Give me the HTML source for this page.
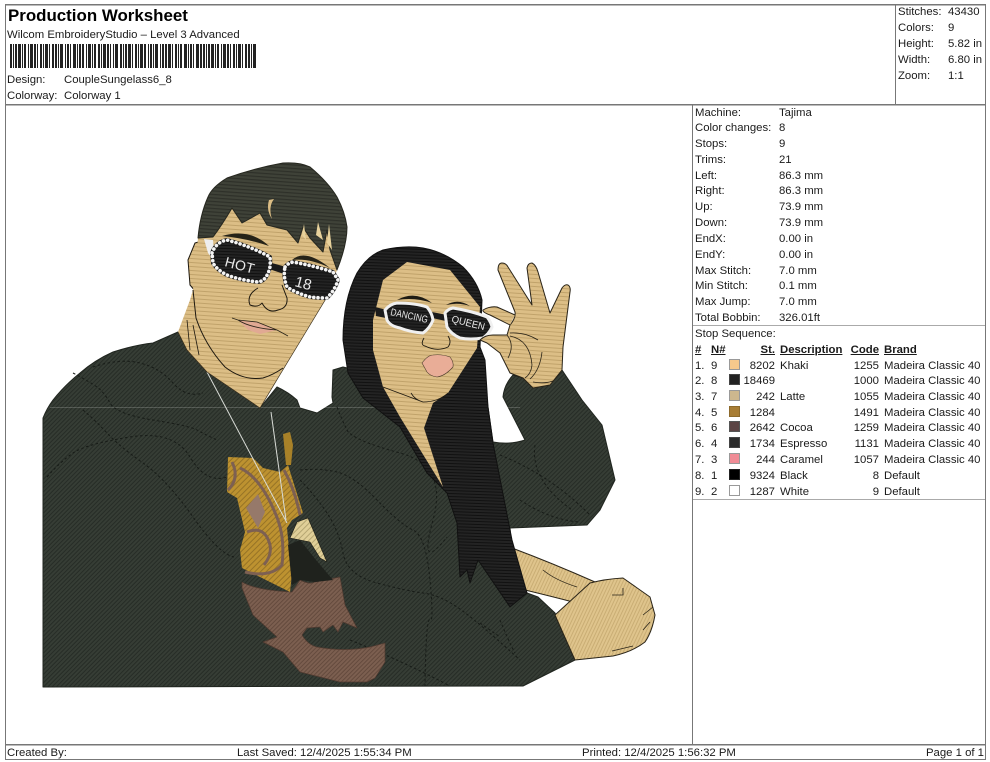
<!DOCTYPE html>
<html><head><meta charset="utf-8"><title>Production Worksheet</title>
<style>
html,body{margin:0;padding:0;background:#fff}
#p{position:relative;width:990px;height:762px;overflow:hidden;background:#fff;font:11.35px/14px "Liberation Sans",sans-serif;color:#1a1a1a}
#p div{position:absolute;white-space:nowrap}
.r{text-align:right}
.b{font-weight:bold;text-decoration:underline}
.s{width:9px;height:9px;border:1px solid #999}
svg{position:absolute;left:0;top:0}
svg path{stroke-linejoin:round}
</style></head><body><div id="p">
<svg width="990" height="762" viewBox="0 0 990 762">
<defs>
<pattern id="j" width="3" height="3" patternUnits="userSpaceOnUse" patternTransform="rotate(-45)"><rect width="3" height="3" fill="#363d35"/><rect width="3" height="1" fill="#262c26"/></pattern>
<pattern id="h" width="3.5" height="3.5" patternUnits="userSpaceOnUse" patternTransform="rotate(4)"><rect width="4" height="4" fill="#3f4238"/><rect width="4" height="1.2" fill="#2e3029"/></pattern>
<pattern id="k" width="3" height="3" patternUnits="userSpaceOnUse" patternTransform="rotate(2)"><rect width="3" height="3" fill="#232323"/><rect width="3" height="1" fill="#111"/></pattern>
<pattern id="t" width="4" height="4" patternUnits="userSpaceOnUse" patternTransform="rotate(4)"><rect width="4" height="4" fill="#dcbe86"/><rect width="4" height="1" fill="#c0a26a"/></pattern>
<pattern id="u" width="3" height="3" patternUnits="userSpaceOnUse" patternTransform="rotate(-65)"><rect width="3" height="3" fill="#dfc48c"/><rect width="3" height="1" fill="#c9ad74"/></pattern>
<pattern id="g" width="4" height="4" patternUnits="userSpaceOnUse" patternTransform="rotate(-45)"><rect width="4" height="4" fill="#bd9230"/><rect width="4" height="1" fill="#967326"/></pattern>
<pattern id="m" width="3" height="3" patternUnits="userSpaceOnUse" patternTransform="rotate(-45)"><rect width="3" height="3" fill="#7c5f50"/><rect width="3" height="1" fill="#644a3d"/></pattern>
<pattern id="c" width="4" height="4" patternUnits="userSpaceOnUse" patternTransform="rotate(-45)"><rect width="4" height="4" fill="#e0cf98"/><rect width="4" height="1" fill="#b5a672"/></pattern>
</defs>

<!-- frame -->
<g fill="#777">
<rect x="5" y="4" width="980" height="1.5"/><rect x="5" y="104" width="980" height="1.5"/>
<rect x="5" y="744" width="980" height="1.5"/><rect x="5" y="759" width="980" height="1"/>
<rect x="5" y="4" width="1" height="756"/><rect x="985" y="4" width="1" height="756"/>
<rect x="895" y="4" width="1" height="100"/><rect x="692" y="104" width="1" height="640"/>
<rect x="693" y="325" width="292" height="1" fill="#aaa"/><rect x="693" y="499" width="292" height="1" fill="#aaa"/>
</g>

<!-- barcode -->
<line x1="10" y1="56" x2="256" y2="56" stroke="#222" stroke-width="24" stroke-dasharray="2 1 1 1 2 1 3 1 1 1 2 2 1 1 3 1 2 1 1 2 2 1 1 1 3 1 1 2 2 1 2 1 1 1 3 2 1 1 2 1 1 2 3 1 1 1 2 1 2 2 1 1 3 1 1 1 2 2 2 1 1 1 3 1 2 1 1 2 1 1 3 2 2 1 1 1 2 1 3 1 1 2 2 1 1 1 3 1 2 2 1 1 2 1 1 1 3 2 1 1 2 1 2 1 3 1 1 2 2 1 1 1 2 2 3 1 1 1 2 1 1 2 3 1 2 1"/>

<!-- lower arm -->
<path d="M512,548Q552,563 595,582L573,602Q550,596 525,590Z" fill="url(#u)" stroke="#2a2418" stroke-width="1"/>
<path d="M543,570Q555,580 577,587" fill="none" stroke="#2a2418" stroke-width=".8"/>

<!-- jacket -->
<path d="M43,687L43,418Q47,408 53,400Q65,385 80,373Q95,360 113,352Q135,345 153,343L178,332L260,408L277,387Q288,392 297,400L300,408L317,413L333,403L332,397L333,370L343,367L400,380L480,350L488,407L493,442Q510,445 525,440L503,397Q504,385 513,375L523,378L562,370L582,400L602,425L615,480L600,510L587,525L510,528L512,550L527,593L538,597L555,613L575,660L523,686Z" fill="url(#j)" stroke="#20251f" stroke-width="1"/>
<path d="M50,407.5H520" stroke="#fff" stroke-opacity=".18" stroke-width="1"/>

<!-- stitch contours -->
<g fill="none" stroke="#171b17" stroke-width="1" stroke-dasharray="2.5 2.5">
<path d="M93,367Q120,358 140,363T173,383T203,393"/>
<path d="M83,410Q95,420 107,433T143,463T193,517T234,557"/>
<path d="M47,477Q60,462 73,453T130,437T190,457T227,477"/>
<path d="M73,373Q90,382 97,387T110,403T153,420T197,430T217,440"/>
<path d="M337,407Q342,420 347,430T400,453T433,520T447,537"/>
<path d="M300,470Q320,468 337,472T377,500T413,530T430,580T430,620T425,686"/>
<path d="M300,480Q315,495 327,513T343,553T377,583T423,593T457,607T520,660"/>
<path d="M480,623Q490,630 500,637"/>
<path d="M500,620Q508,640 515,653"/>
<path d="M350,640Q400,660 450,686"/>
<path d="M500,455Q550,475 590,515"/>
<path d="M535,445Q530,480 572,510"/>
<path d="M520,500Q550,520 580,522"/>
</g>

<!-- shirt graphic -->
<path d="M242,582Q255,590 292,592L300,580Q310,585 315,582L340,577L345,605L357,628L343,622L338,632L333,625L323,632L320,627L307,628L302,635Q308,645 317,647Q345,652 370,647L385,643L385,662L375,678L367,682L340,682L300,672L283,652L263,642L277,637L253,615L242,588Z" fill="url(#m)" stroke="#4f3a30" stroke-width=".7"/>
<path d="M228,457L253,458L263,468L280,472L288,465L303,513L292,520L287,528L290,560L292,573L290,592L242,568L240,550L245,532L237,498L227,492Z" fill="url(#g)"/>
<path d="M283,434L290,432L293,445L291,465L286,465Z" fill="#a88128"/>
<path d="M228,490Q240,478 232,462M240,468Q262,478 278,520Q285,540 282,565Q270,578 245,572M247,532Q265,525 270,545Q272,555 264,565M284,470Q295,490 300,515" fill="none" stroke="#7d6052" stroke-width="3"/>
<path d="M246,508L258,494L265,512L258,528Z" fill="#96796a"/>
<path d="M288,545L300,540L316,560L333,580L315,582L300,580L292,585Z" fill="#1f221d"/>
<path d="M290,538L297,522L308,518L327,562L320,558L310,542Z" fill="url(#c)" stroke="#1a1a14" stroke-width=".6"/>
<path d="M207,372L287,523M271,412L286,520" stroke="#d8dbd6" stroke-width="1" fill="none"/>

<!-- fist -->
<path d="M555,615L590,583Q605,579 623,578L650,597L655,615Q652,632 645,642Q632,652 613,656L575,660Z" fill="url(#u)" stroke="#2a2418" stroke-width="1"/>
<path d="M612,595L623,595L623,588M643,615L653,607M643,630L650,622M612,651L633,646" fill="none" stroke="#2a2418" stroke-width=".8"/>

<!-- man neck + face -->
<path d="M205,240L195,243L188,260L190,285L196,292L210,280Z" fill="url(#t)" stroke="#1d180f" stroke-width="1"/>
<path d="M198,238L208,197L283,163L337,197L337,270L327,297L278,378L260,408L207,372L187,350L178,332L190,300L193,290Z" fill="url(#t)"/>
<path d="M327,297L278,378L260,408L207,372L187,350L178,332" fill="none" stroke="#3a2f1c" stroke-width=".7"/>
<path d="M193,290L196,318Q205,345 225,367Q243,381 263,378Q273,375 283,368" fill="none" stroke="#1d180f" stroke-width="1"/>
<path d="M187,320L190,350M193,325L199,355" fill="none" stroke="#1d180f" stroke-width=".8"/>

<!-- man hair -->
<path d="M198,238Q200,215 208,197Q212,187 227,178Q255,168 283,163Q300,162 310,167Q328,182 337,197Q345,212 347,227Q347,245 337,270L330,250L327,230L323,252L310,238L303,227L298,243L287,230L267,225L260,213L242,223L232,208Q222,225 213,237Z" fill="url(#h)" stroke="#26271f" stroke-width="1"/>
<path d="M269,200Q266,210 272,219Q268,207 274,199Z" fill="#dcbd84"/>
<path d="M304,224L306,240L302,235ZM318,222L323,240L316,235ZM329,224L332,250L327,243Z" fill="#e8d29c"/>

<!-- man brows -->
<path d="M222,236Q250,228 269,246Q245,238 222,236ZM292,260Q305,248 330,268Q310,258 292,260Z" fill="#262318"/>
<!-- man glasses -->
<path d="M204,239L213,240L215,262L208,253Z" fill="#eee"/>
<path d="M268,262L290,268L287,275L266,268Z" fill="#1a1a1a"/>
<path d="M212,253Q216,242 227,240Q250,246 270,257Q271,268 268,273Q265,281 258,282Q240,280 227,275Q217,270 213,263Z" fill="url(#k)" stroke="#1a1a1a" stroke-width="4"/>
<path d="M212,253Q216,242 227,240Q250,246 270,257Q271,268 268,273Q265,281 258,282Q240,280 227,275Q217,270 213,263Z" fill="none" stroke="#f4f4f4" stroke-width="3.6" stroke-dasharray=".1 4.2" stroke-linecap="round"/>
<path d="M285,267Q288,263 293,262Q315,266 333,272L338,280Q335,290 327,298Q318,298 310,297Q296,293 287,287Q283,277 285,267Z" fill="url(#k)" stroke="#1a1a1a" stroke-width="4"/>
<path d="M285,267Q288,263 293,262Q315,266 333,272L338,280Q335,290 327,298Q318,298 310,297Q296,293 287,287Q283,277 285,267Z" fill="none" stroke="#f4f4f4" stroke-width="3.6" stroke-dasharray=".1 4.2" stroke-linecap="round"/>
<text x="224" y="266" transform="rotate(15 224 266)" font-family="Liberation Sans,sans-serif" font-size="14" fill="#e8e8e8" textLength="30">HOT</text>
<text x="294" y="286" transform="rotate(15 294 286)" font-family="Liberation Sans,sans-serif" font-size="15" fill="#e8e8e8">18</text>
<!-- man nose & lips -->
<path d="M258,288Q246,295 250,305Q258,308 262,303Q268,314 278,310Q288,308 287,298L282,285" fill="none" stroke="#1d180f" stroke-width="1"/>
<path d="M238,320L257,322L277,330L260,334L248,330Z" fill="#e1a993"/>
<path d="M232,318L238,320L257,322L277,330L288,336M238,320Q250,328 277,330" fill="none" stroke="#2a2418" stroke-width=".8"/>

<!-- woman hair -->
<path d="M343,340Q343,300 357,273Q368,255 383,250Q405,245 423,248Q445,252 463,267Q478,282 482,300L480,347L485,360L488,407L493,443L512,540L527,593L510,607L478,560L470,583L467,570L460,577L457,523L447,493L427,473L400,427L363,398L348,373Z" fill="url(#k)" stroke="#111" stroke-width="1"/>
<!-- face + chest -->
<path d="M373,320L383,280L407,262L450,270L480,307L477,348L448,393L433,403L424,428L443,487L400,417L383,387L373,350Z" fill="url(#t)"/>
<path d="M383,387L423,402Q438,402 448,393M411,393Q415,400 423,402" fill="none" stroke="#1d180f" stroke-width=".8"/>
<!-- woman brows -->
<path d="M397,300Q415,290 432,303Q415,297 397,300ZM446,305Q458,298 470,306Q458,302 446,305Z" fill="#1f1c14"/>
<!-- woman glasses -->
<path d="M375,307L387,310L386,318L376,316ZM432,312L447,315L446,321L432,318Z" fill="#1b1b1b"/>
<path d="M385,310Q390,304 397,303Q415,303 427,307Q432,313 433,320Q430,328 423,333Q410,332 400,328Q390,326 387,320Z" fill="url(#k)" stroke="#f0f0f0" stroke-width="3"/>
<path d="M445,313Q448,309 453,308Q472,311 487,317Q491,322 492,327Q489,334 483,338Q470,340 460,338Q451,334 447,327Z" fill="url(#k)" stroke="#f0f0f0" stroke-width="3"/>
<text x="390" y="315" transform="rotate(12 390 315)" font-family="Liberation Sans,sans-serif" font-size="10" fill="#e8e8e8" textLength="38" lengthAdjust="spacingAndGlyphs">DANCING</text>
<text x="451" y="322" transform="rotate(14 451 322)" font-family="Liberation Sans,sans-serif" font-size="10" fill="#e8e8e8" textLength="34" lengthAdjust="spacingAndGlyphs">QUEEN</text>
<!-- woman nose lips -->
<path d="M424,338Q420,345 425,346Q437,352 448,347Q452,342 448,336" fill="none" stroke="#1d180f" stroke-width=".9"/>
<path d="M422,363Q428,355 433,355Q442,354 450,357Q454,362 453,367Q445,376 437,377Q430,376 427,372Z" fill="#e9ad97" stroke="#4a3a2a" stroke-width=".6"/>

<!-- hand -->
<path d="M510,325Q516,318 515,312L498,270Q498,263 502,263Q506,263 508,267L532,305L527,268Q528,263 532,263Q536,265 538,272L550,313L562,288Q565,284 568,285Q571,287 570,292L563,347L562,370L550,385L533,388L523,378L510,373L500,353L487,343L480,340Q485,335 493,335L507,335Z" fill="url(#t)" stroke="#2a2418" stroke-width="1"/>
<path d="M510,325L490,315Q482,312 483,310Q490,306 497,307L515,315" fill="url(#t)" stroke="#2a2418" stroke-width="1"/>
<path d="M510,333Q525,332 538,340M510,336Q530,340 532,365Q531,374 525,378M507,335Q515,345 508,358M542,352Q540,370 530,379M533,382Q545,384 553,381" fill="none" stroke="#2a2418" stroke-width=".8"/>
</svg>

<div style="left:8px;top:6px;font-size:16.9px;line-height:20px;font-weight:bold;color:#000">Production Worksheet</div>
<div style="left:7px;top:28px">Wilcom EmbroideryStudio – Level 3 Advanced</div>
<div style="left:7px;top:73px">Design:</div><div style="left:64px;top:73px">CoupleSungelass6_8</div>
<div style="left:7px;top:89px">Colorway:</div><div style="left:64px;top:89px">Colorway 1</div>

<div style="left:898px;top:5px">Stitches:</div><div style="left:948px;top:5px">43430</div>
<div style="left:898px;top:21px">Colors:</div><div style="left:948px;top:21px">9</div>
<div style="left:898px;top:37px">Height:</div><div style="left:948px;top:37px">5.82 in</div>
<div style="left:898px;top:53px">Width:</div><div style="left:948px;top:53px">6.80 in</div>
<div style="left:898px;top:69px">Zoom:</div><div style="left:948px;top:69px">1:1</div>

<div style="left:695px;top:106px">Machine:</div><div style="left:779px;top:106px">Tajima</div>
<div style="left:695px;top:121px">Color changes:</div><div style="left:779px;top:121px">8</div>
<div style="left:695px;top:137px">Stops:</div><div style="left:779px;top:137px">9</div>
<div style="left:695px;top:153px">Trims:</div><div style="left:779px;top:153px">21</div>
<div style="left:695px;top:169px">Left:</div><div style="left:779px;top:169px">86.3 mm</div>
<div style="left:695px;top:184px">Right:</div><div style="left:779px;top:184px">86.3 mm</div>
<div style="left:695px;top:200px">Up:</div><div style="left:779px;top:200px">73.9 mm</div>
<div style="left:695px;top:216px">Down:</div><div style="left:779px;top:216px">73.9 mm</div>
<div style="left:695px;top:232px">EndX:</div><div style="left:779px;top:232px">0.00 in</div>
<div style="left:695px;top:248px">EndY:</div><div style="left:779px;top:248px">0.00 in</div>
<div style="left:695px;top:264px">Max Stitch:</div><div style="left:779px;top:264px">7.0 mm</div>
<div style="left:695px;top:279px">Min Stitch:</div><div style="left:779px;top:279px">0.1 mm</div>
<div style="left:695px;top:295px">Max Jump:</div><div style="left:779px;top:295px">7.0 mm</div>
<div style="left:695px;top:311px">Total Bobbin:</div><div style="left:779px;top:311px">326.01ft</div>

<div style="left:695px;top:327px">Stop Sequence:</div>
<div class="b" style="left:695px;top:343px">#</div><div class="b" style="left:711px;top:343px">N#</div>
<div class="b r" style="right:215px;top:343px">St.</div><div class="b" style="left:780px;top:343px">Description</div>
<div class="b r" style="right:111px;top:343px">Code</div><div class="b" style="left:884px;top:343px">Brand</div>

<div style="left:695px;top:359px">1.</div><div style="left:711px;top:359px">9</div><div class="s" style="left:729px;top:359px;background:#f6c98c"></div><div class="r" style="right:215px;top:359px">8202</div><div style="left:780px;top:359px">Khaki</div><div class="r" style="right:111px;top:359px">1255</div><div style="left:884px;top:359px">Madeira Classic 40</div>
<div style="left:695px;top:374px">2.</div><div style="left:711px;top:374px">8</div><div class="s" style="left:729px;top:374px;background:#222;border-color:#444"></div><div class="r" style="right:215px;top:374px">18469</div><div class="r" style="right:111px;top:374px">1000</div><div style="left:884px;top:374px">Madeira Classic 40</div>
<div style="left:695px;top:390px">3.</div><div style="left:711px;top:390px">7</div><div class="s" style="left:729px;top:390px;background:#cdb78e"></div><div class="r" style="right:215px;top:390px">242</div><div style="left:780px;top:390px">Latte</div><div class="r" style="right:111px;top:390px">1055</div><div style="left:884px;top:390px">Madeira Classic 40</div>
<div style="left:695px;top:406px">4.</div><div style="left:711px;top:406px">5</div><div class="s" style="left:729px;top:406px;background:#a87d34;border-color:#8d6a2c"></div><div class="r" style="right:215px;top:406px">1284</div><div class="r" style="right:111px;top:406px">1491</div><div style="left:884px;top:406px">Madeira Classic 40</div>
<div style="left:695px;top:421px">5.</div><div style="left:711px;top:421px">6</div><div class="s" style="left:729px;top:421px;background:#5c4444;border-color:#555"></div><div class="r" style="right:215px;top:421px">2642</div><div style="left:780px;top:421px">Cocoa</div><div class="r" style="right:111px;top:421px">1259</div><div style="left:884px;top:421px">Madeira Classic 40</div>
<div style="left:695px;top:437px">6.</div><div style="left:711px;top:437px">4</div><div class="s" style="left:729px;top:437px;background:#2b2b2b;border-color:#444"></div><div class="r" style="right:215px;top:437px">1734</div><div style="left:780px;top:437px">Espresso</div><div class="r" style="right:111px;top:437px">1131</div><div style="left:884px;top:437px">Madeira Classic 40</div>
<div style="left:695px;top:453px">7.</div><div style="left:711px;top:453px">3</div><div class="s" style="left:729px;top:453px;background:#f08c96"></div><div class="r" style="right:215px;top:453px">244</div><div style="left:780px;top:453px">Caramel</div><div class="r" style="right:111px;top:453px">1057</div><div style="left:884px;top:453px">Madeira Classic 40</div>
<div style="left:695px;top:469px">8.</div><div style="left:711px;top:469px">1</div><div class="s" style="left:729px;top:469px;background:#000;border-color:#222"></div><div class="r" style="right:215px;top:469px">9324</div><div style="left:780px;top:469px">Black</div><div class="r" style="right:111px;top:469px">8</div><div style="left:884px;top:469px">Default</div>
<div style="left:695px;top:485px">9.</div><div style="left:711px;top:485px">2</div><div class="s" style="left:729px;top:485px;background:#fff"></div><div class="r" style="right:215px;top:485px">1287</div><div style="left:780px;top:485px">White</div><div class="r" style="right:111px;top:485px">9</div><div style="left:884px;top:485px">Default</div>

<div style="left:7px;top:746px">Created By:</div>
<div style="left:237px;top:746px">Last Saved: 12/4/2025 1:55:34 PM</div>
<div style="left:582px;top:746px">Printed: 12/4/2025 1:56:32 PM</div>
<div class="r" style="right:6px;top:746px">Page 1 of 1</div>
</div></body></html>
